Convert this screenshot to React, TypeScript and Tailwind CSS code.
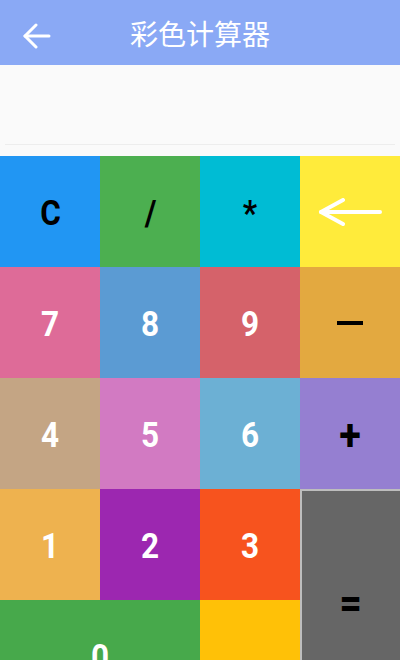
import React from 'react';

type Key = {
    label: React.ReactNode;
    bg: string;
    dark?: boolean;
    span?: string;
    big?: boolean;
};

const ArrowLeft = ({ className }: { className?: string }) => (
    <svg viewBox="0 0 64 28" className={className} fill="none" stroke="currentColor" strokeWidth="4" strokeLinecap="round" strokeLinejoin="round">
        <path d="M62 14H3" />
        <path d="M25 2L3 14l22 12" />
    </svg>
);

const keys: Key[] = [
    { label: 'C', bg: 'bg-[#2196f3]', dark: true },
    { label: '/', bg: 'bg-[#4caf50]', dark: true },
    { label: '*', bg: 'bg-[#00bcd4]', dark: true },
    { label: <ArrowLeft className="w-[64px] h-[28px] text-white" />, bg: 'bg-[#ffeb3b]' },
    { label: '7', bg: 'bg-[#de6b98]' },
    { label: '8', bg: 'bg-[#5b9bd3]' },
    { label: '9', bg: 'bg-[#d5626a]' },
    { label: <span className="block w-[26px] h-[4px] bg-black" />, bg: 'bg-[#e3a940]' },
    { label: '4', bg: 'bg-[#c4a584]' },
    { label: '5', bg: 'bg-[#d27ac2]' },
    { label: '6', bg: 'bg-[#6cb0d4]' },
    { label: '+', bg: 'bg-[#957fd1]', dark: true, big: true },
    { label: '1', bg: 'bg-[#eeb24f]' },
    { label: '2', bg: 'bg-[#9c27b0]' },
    { label: '3', bg: 'bg-[#f7531e]' },
    { label: '=', bg: 'bg-[#666666] border-l-2 border-t-2 border-[#bdbdbd]', dark: true, span: 'row-span-2', big: true },
    { label: '0', bg: 'bg-[#47a94b]', span: 'col-span-2' },
    { label: '', bg: 'bg-[#ffc107]' },
];

export default function App() {
    return (
        <div className="w-[400px] h-[660px] overflow-hidden bg-white" style={{ fontFamily: 'Roboto, "Noto Sans CJK SC", sans-serif' }}>
            <div className="h-[65px] bg-[#8aa9f5] flex items-center relative">
                <svg viewBox="0 0 28 26" className="absolute left-[23px] top-[23px] w-[28px] h-[26px] text-white" fill="none" stroke="currentColor" strokeWidth="3" strokeLinecap="round" strokeLinejoin="round">
                    <path d="M26 13H2" />
                    <path d="M13 2L2 13l11 11" />
                </svg>
                <h1 className="w-full text-center text-white text-[28px] font-normal leading-none" style={{ fontFamily: '"Noto Sans CJK SC", sans-serif' }}>彩色计算器</h1>
            </div>
            <div className="h-[91px] bg-[#fafafa] px-[5px]">
                <div className="h-[80px] border-b border-[#ededed]" />
            </div>
            <div className="grid grid-cols-4 auto-rows-[111px]">
                {keys.map((k, i) => (
                    <button
                        key={i}
                        className={`${k.bg} ${k.span ?? ''} flex items-center justify-center leading-none font-bold ${k.big ? 'text-[44px]' : 'text-[35px]'} ${k.dark ? 'text-black' : 'text-white'}`}
                    >
                        {typeof k.label === 'string'
                            ? <span className="inline-block scale-x-[0.9] pt-[3px]">{k.label}</span>
                            : k.label}
                    </button>
                ))}
            </div>
        </div>
    );
}
